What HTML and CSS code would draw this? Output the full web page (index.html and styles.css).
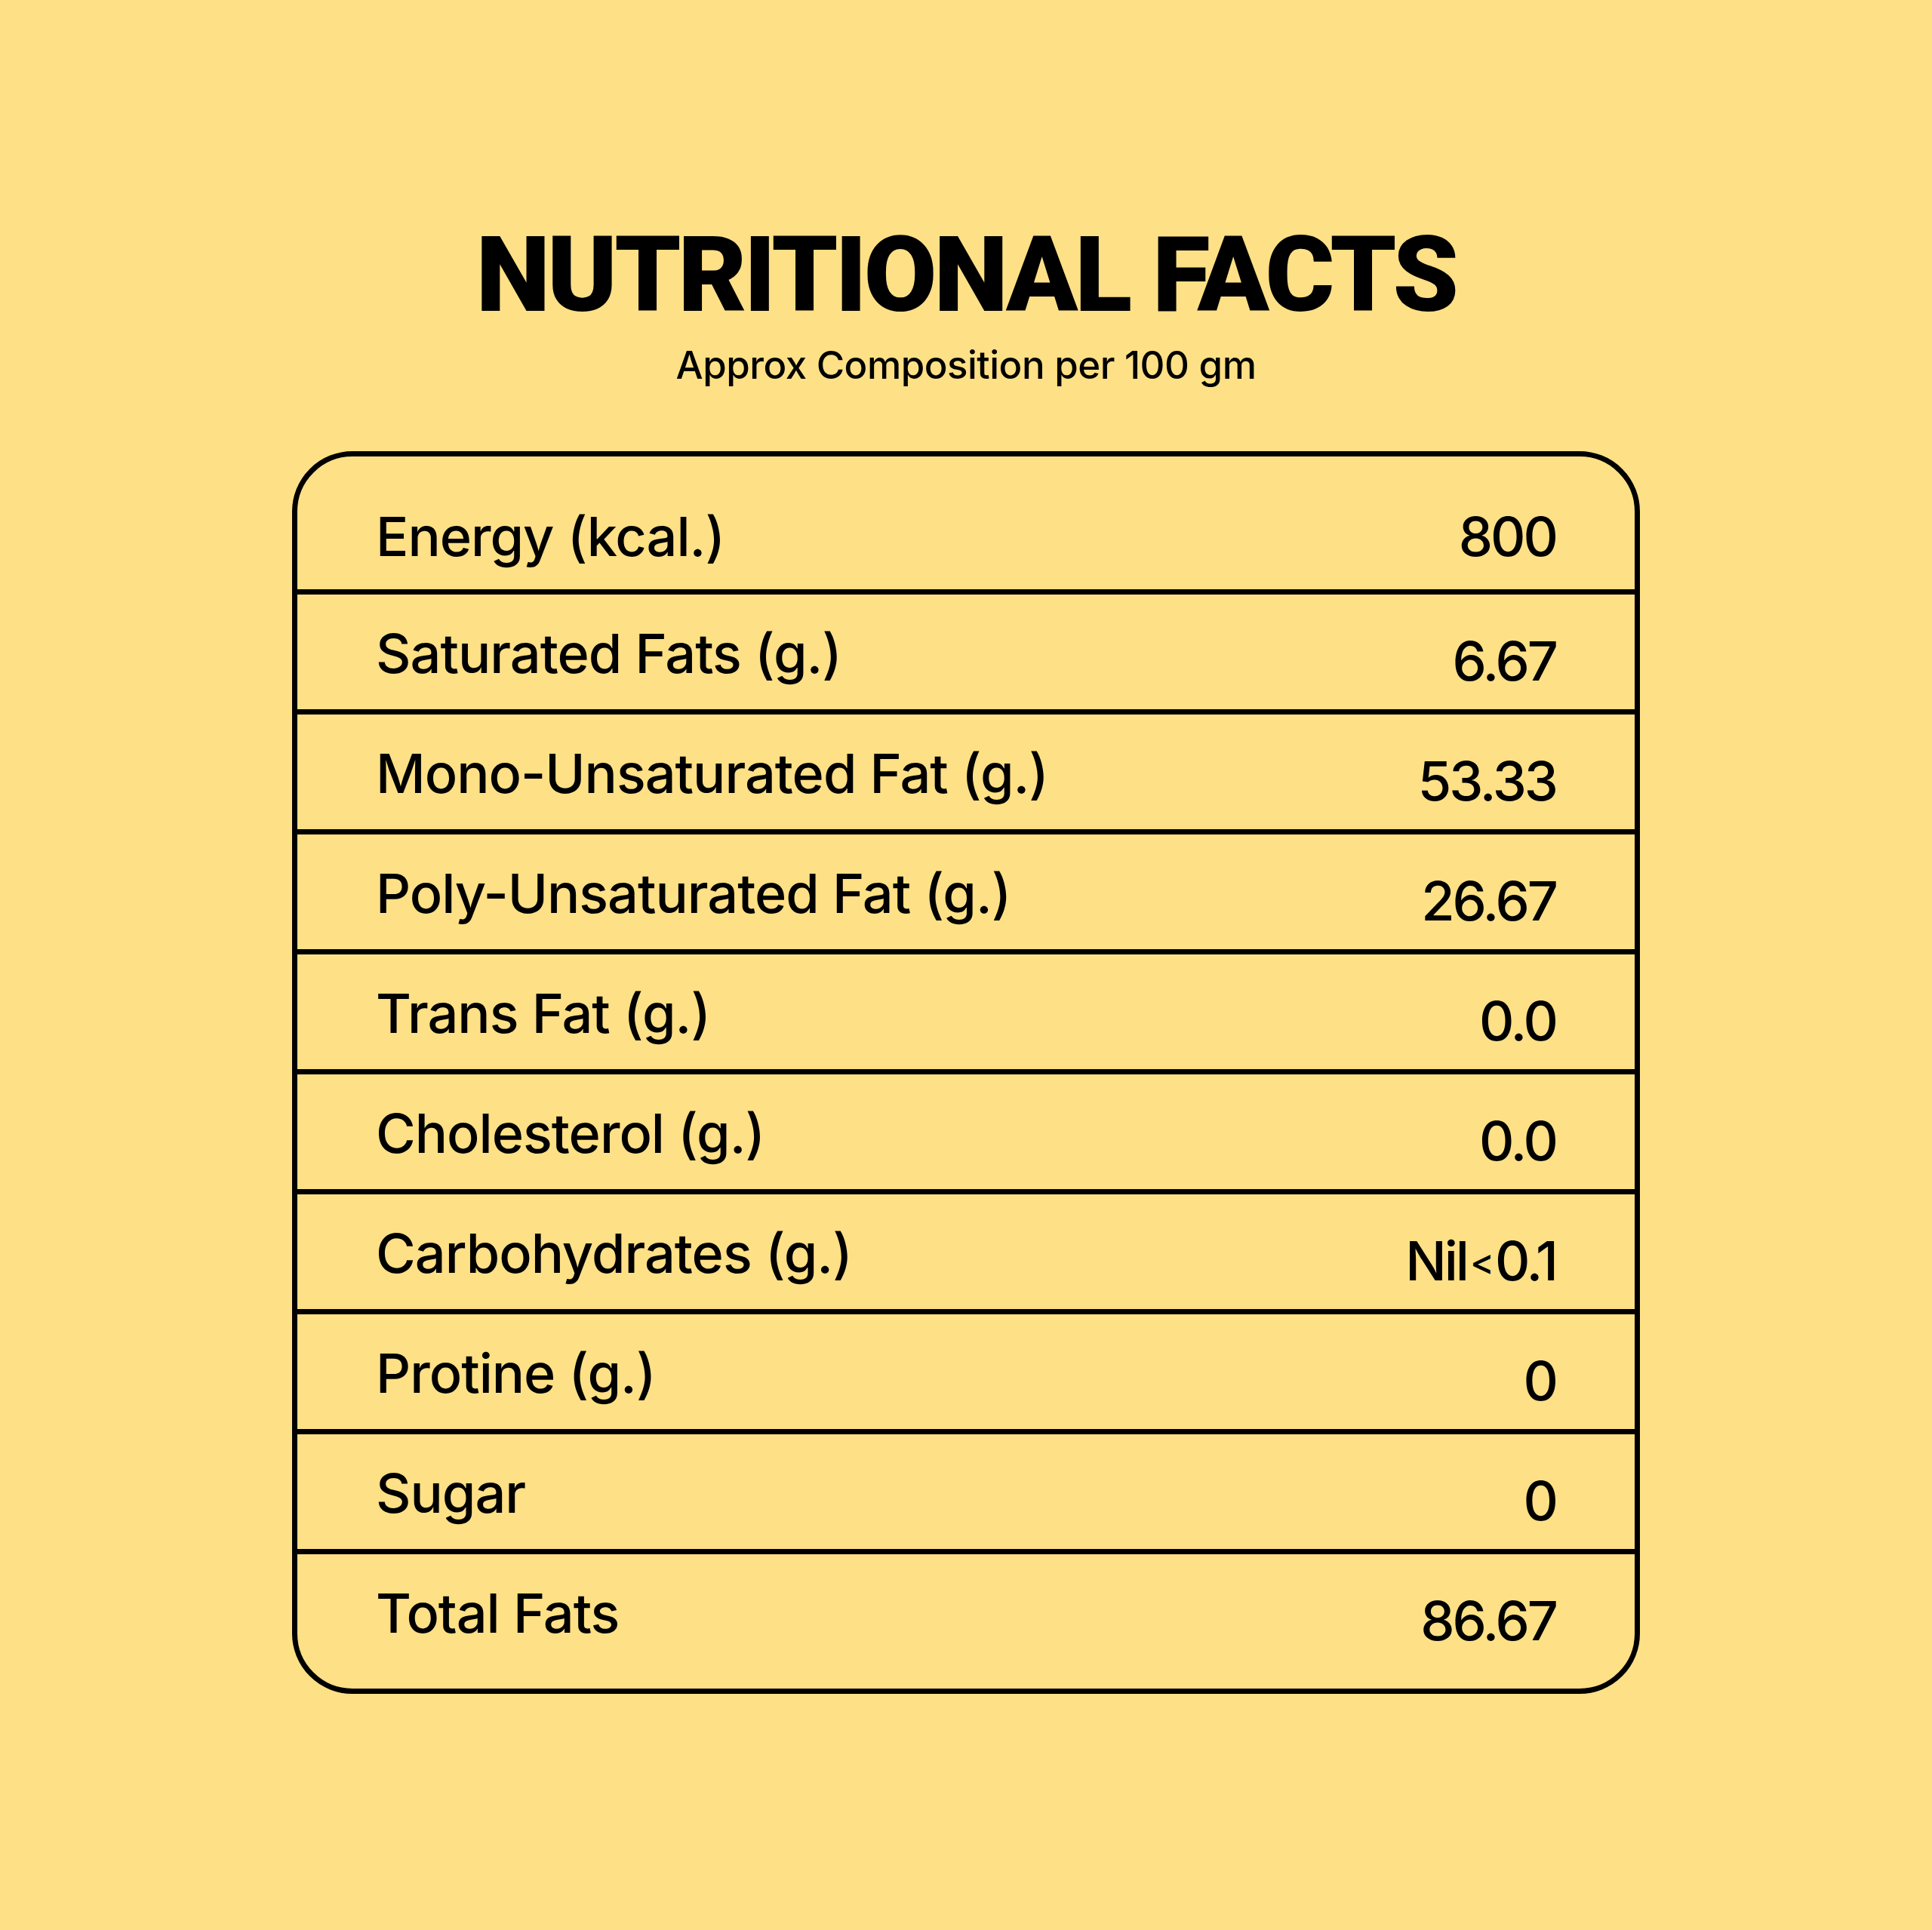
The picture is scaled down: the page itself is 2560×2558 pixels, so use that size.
FILE: index.html
```html
<!DOCTYPE html>
<html lang="en">
<head>
    <meta charset="UTF-8">
    <meta name="viewport" content="width=device-width, initial-scale=1.0">
    <title>Nutritional Facts</title>
    <link rel="stylesheet" href="styles.css">
</head>
<body>
    <div class="pagina">
        <h1 class="titulo">NUTRITIONAL FACTS</h1>
        <p class="subtitulo">Approx Composition per 100 gm</p>

        <div class="tabla">
            <div class="fila primera">
                <span class="nombre">Energy (kcal.)</span>
                <span class="valor">800</span>
            </div>
            <div class="fila">
                <span class="nombre">Saturated Fats (g.)</span>
                <span class="valor">6.67</span>
            </div>
            <div class="fila">
                <span class="nombre">Mono-Unsaturated Fat (g.)</span>
                <span class="valor">53.33</span>
            </div>
            <div class="fila">
                <span class="nombre">Poly-Unsaturated Fat (g.)</span>
                <span class="valor">26.67</span>
            </div>
            <div class="fila">
                <span class="nombre">Trans Fat (g.)</span>
                <span class="valor">0.0</span>
            </div>
            <div class="fila">
                <span class="nombre">Cholesterol (g.)</span>
                <span class="valor">0.0</span>
            </div>
            <div class="fila">
                <span class="nombre">Carbohydrates (g.)</span>
                <span class="valor nil">Nil<span class="menor">&lt;</span>0.1</span>
            </div>
            <div class="fila">
                <span class="nombre">Protine (g.)</span>
                <span class="valor">0</span>
            </div>
            <div class="fila">
                <span class="nombre">Sugar</span>
                <span class="valor">0</span>
            </div>
            <div class="fila ultima">
                <span class="nombre">Total Fats</span>
                <span class="valor">86.67</span>
            </div>
        </div>
    </div>
</body>
</html>
```

FILE: styles.css
```css
body {
    background-color: #FEE086;
    font-family: Inter, "Noto Sans", sans-serif;
    color: #000;
    margin: 0;
    padding: 0;
}

.pagina {
    display: flex;
    flex-direction: column;
    align-items: center;
    padding-top: 294px;
}

.titulo {
    font-family: Roboto, Inter, sans-serif;
    font-size: 140px;
    font-weight: 900;
    line-height: 1;
    margin: 0;
    letter-spacing: -4px;
}

.subtitulo {
    font-size: 51px;
    font-weight: 500;
    line-height: 1;
    margin: 24px 0 0 0;
    letter-spacing: -0.5px;
}

/* Table box */
.tabla {
    width: 1772px;
    margin-top: 89px;
    border: 7px solid #000;
    border-radius: 80px;
}

.fila {
    display: flex;
    justify-content: space-between;
    align-items: flex-start;
    height: 152px;
    padding: 0 104px;
    border-bottom: 7px solid #000;
    font-size: 72px;
    font-weight: 500;
    line-height: 1;
    letter-spacing: -1px;
}

.fila .nombre {
    padding-top: 42px;
}

.fila .valor {
    padding-top: 52px;
    letter-spacing: -3px;
}

.fila.primera {
    height: 176px;
}

.fila.primera .nombre,
.fila.primera .valor {
    padding-top: 70px;
}

.fila.ultima {
    height: 178px;
    border-bottom: none;
}

.menor {
    font-size: 48px;
    vertical-align: 8px;
    margin: 0 4px;
}
```
